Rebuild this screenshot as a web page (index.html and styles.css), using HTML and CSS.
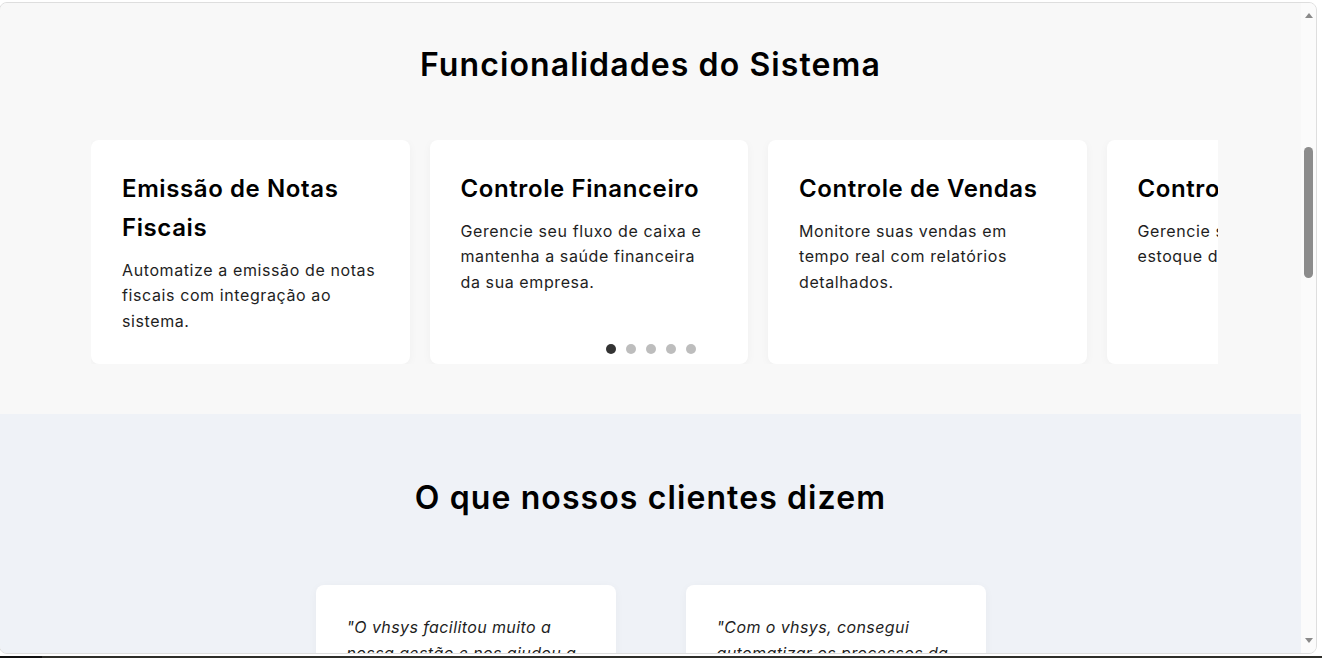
FILE: index.html
```html
<!DOCTYPE html>
<html lang="pt-BR">
<head>
<meta charset="utf-8">
<title>Funcionalidades do Sistema</title>
<link rel="stylesheet" href="styles.css">
</head>
<body>
<div class="screen">
  <div class="window">
    <div class="viewport">
      <section class="features">
        <h2 class="section-title">Funcionalidades do Sistema</h2>
        <div class="carousel">
          <div class="track">
            <article class="card">
              <h3 class="card-title">Emissão de Notas Fiscais</h3>
              <p class="card-text">Automatize a emissão de notas fiscais com integração ao sistema.</p>
            </article>
            <article class="card">
              <h3 class="card-title">Controle Financeiro</h3>
              <p class="card-text">Gerencie seu fluxo de caixa e mantenha a saúde financeira da sua empresa.</p>
            </article>
            <article class="card">
              <h3 class="card-title">Controle de Vendas</h3>
              <p class="card-text">Monitore suas vendas em tempo real com relatórios detalhados.</p>
            </article>
            <article class="card">
              <h3 class="card-title">Controle de Estoque</h3>
              <p class="card-text">Gerencie seus produtos e estoque de forma eficiente.</p>
            </article>
          </div>
        </div>
        <div class="dots">
          <span class="dot active"></span>
          <span class="dot"></span>
          <span class="dot"></span>
          <span class="dot"></span>
          <span class="dot"></span>
        </div>
      </section>
      <section class="testimonials">
        <h2 class="section-title">O que nossos clientes dizem</h2>
        <div class="quotes">
          <blockquote class="quote">
            <p class="quote-text">"O vhsys facilitou muito a nossa gestão e nos ajudou a crescer com mais organização."</p>
          </blockquote>
          <blockquote class="quote">
            <p class="quote-text">"Com o vhsys, consegui automatizar os processos da minha empresa e ganhar tempo."</p>
          </blockquote>
        </div>
      </section>
    </div>
    <div class="scrollbar">
      <span class="arrow arrow-up"></span>
      <div class="scroll-track"><span class="thumb"></span></div>
      <span class="arrow arrow-down"></span>
    </div>
  </div>
  <div class="taskbar"><span class="task-start"></span></div>
</div>
</body>
</html>
```

FILE: styles.css
```css
* { box-sizing: border-box; }

html, body {
  margin: 0;
  padding: 0;
  height: 658px;
  overflow: hidden;
  background: #ffffff;
  font-family: "Inter", "Noto Sans", sans-serif;
  color: #111;
}

.screen {
  display: flex;
  flex-direction: column;
  height: 658px;
  padding-top: 2px;
}

.window {
  display: flex;
  width: 1318px;
  height: 652px;
  margin-left: -1px;
  border: 1px solid #dedede;
  border-radius: 8px;
  overflow: hidden;
  background: #f8f8f8;
}

.viewport {
  width: 1301px;
  flex: none;
  overflow: hidden;
  height: 100%;
}

/* ---------- Features ---------- */
.features {
  position: relative;
  background: #f8f8f8;
  padding: 38px 0 50px;
}

.section-title {
  margin: 0;
  text-align: center;
  font-size: 32px;
  font-weight: 600;
  line-height: 48px;
  color: #000;
  letter-spacing: 1.1px;
}

.carousel {
  margin: 51px 83px 0 91px;
  overflow: hidden;
}

.track {
  display: flex;
  gap: 20px;
}

.card {
  flex: 0 0 318.5px;
  background: #fff;
  border-radius: 8px;
  padding: 30px 30px 30px 31px;
  box-shadow: 0 2px 10px rgba(0, 0, 0, 0.04);
}

.card-title {
  margin: 0 0 10px;
  font-size: 24px;
  font-weight: 600;
  line-height: 38.8px;
  color: #000;
  letter-spacing: 0.6px;
}

.card-text {
  margin: 0;
  font-size: 16px;
  line-height: 25.6px;
  color: #1e1e1e;
  letter-spacing: 0.6px;
}

.dots {
  position: absolute;
  left: 0;
  right: 0;
  bottom: 60px;
  display: flex;
  justify-content: center;
  gap: 10px;
}

.dot {
  width: 10px;
  height: 10px;
  border-radius: 50%;
  background: #bdbdbd;
}

.dot.active { background: #333; }

/* ---------- Testimonials ---------- */
.testimonials {
  background: #eff2f7;
  padding: 60px 0 40px;
}

.quotes {
  display: flex;
  justify-content: center;
  gap: 70px;
  margin-top: 63px;
}

.quote {
  margin: 0;
  width: 300px;
  background: #fff;
  border-radius: 8px;
  padding: 30px 30px 30px 31px;
  box-shadow: 0 2px 10px rgba(0, 0, 0, 0.04);
}

.quote-text {
  margin: 0;
  font-size: 16px;
  line-height: 25.6px;
  font-style: italic;
  color: #1e1e1e;
  letter-spacing: 0.4px;
}

/* ---------- Browser chrome ---------- */
.scrollbar {
  flex: none;
  width: 15px;
  background: #fbfbfb;
  display: flex;
  flex-direction: column;
  align-items: center;
}

.arrow {
  width: 0;
  height: 0;
  border-left: 4px solid transparent;
  border-right: 4px solid transparent;
}

.arrow-up {
  margin-top: 10px;
  border-bottom: 5px solid #8a8a8a;
}

.arrow-down {
  margin-bottom: 10px;
  border-top: 5px solid #8a8a8a;
}

.scroll-track {
  flex: 1;
  width: 100%;
  display: flex;
  justify-content: center;
  padding-top: 129px;
}

.thumb {
  width: 9px;
  height: 131px;
  border-radius: 5px;
  background: #8c8c8c;
}

.taskbar {
  margin-top: auto;
  height: 2px;
  background: #2e2e2a;
}

.task-start {
  display: block;
  width: 42px;
  height: 100%;
  background: #111;
}
```
